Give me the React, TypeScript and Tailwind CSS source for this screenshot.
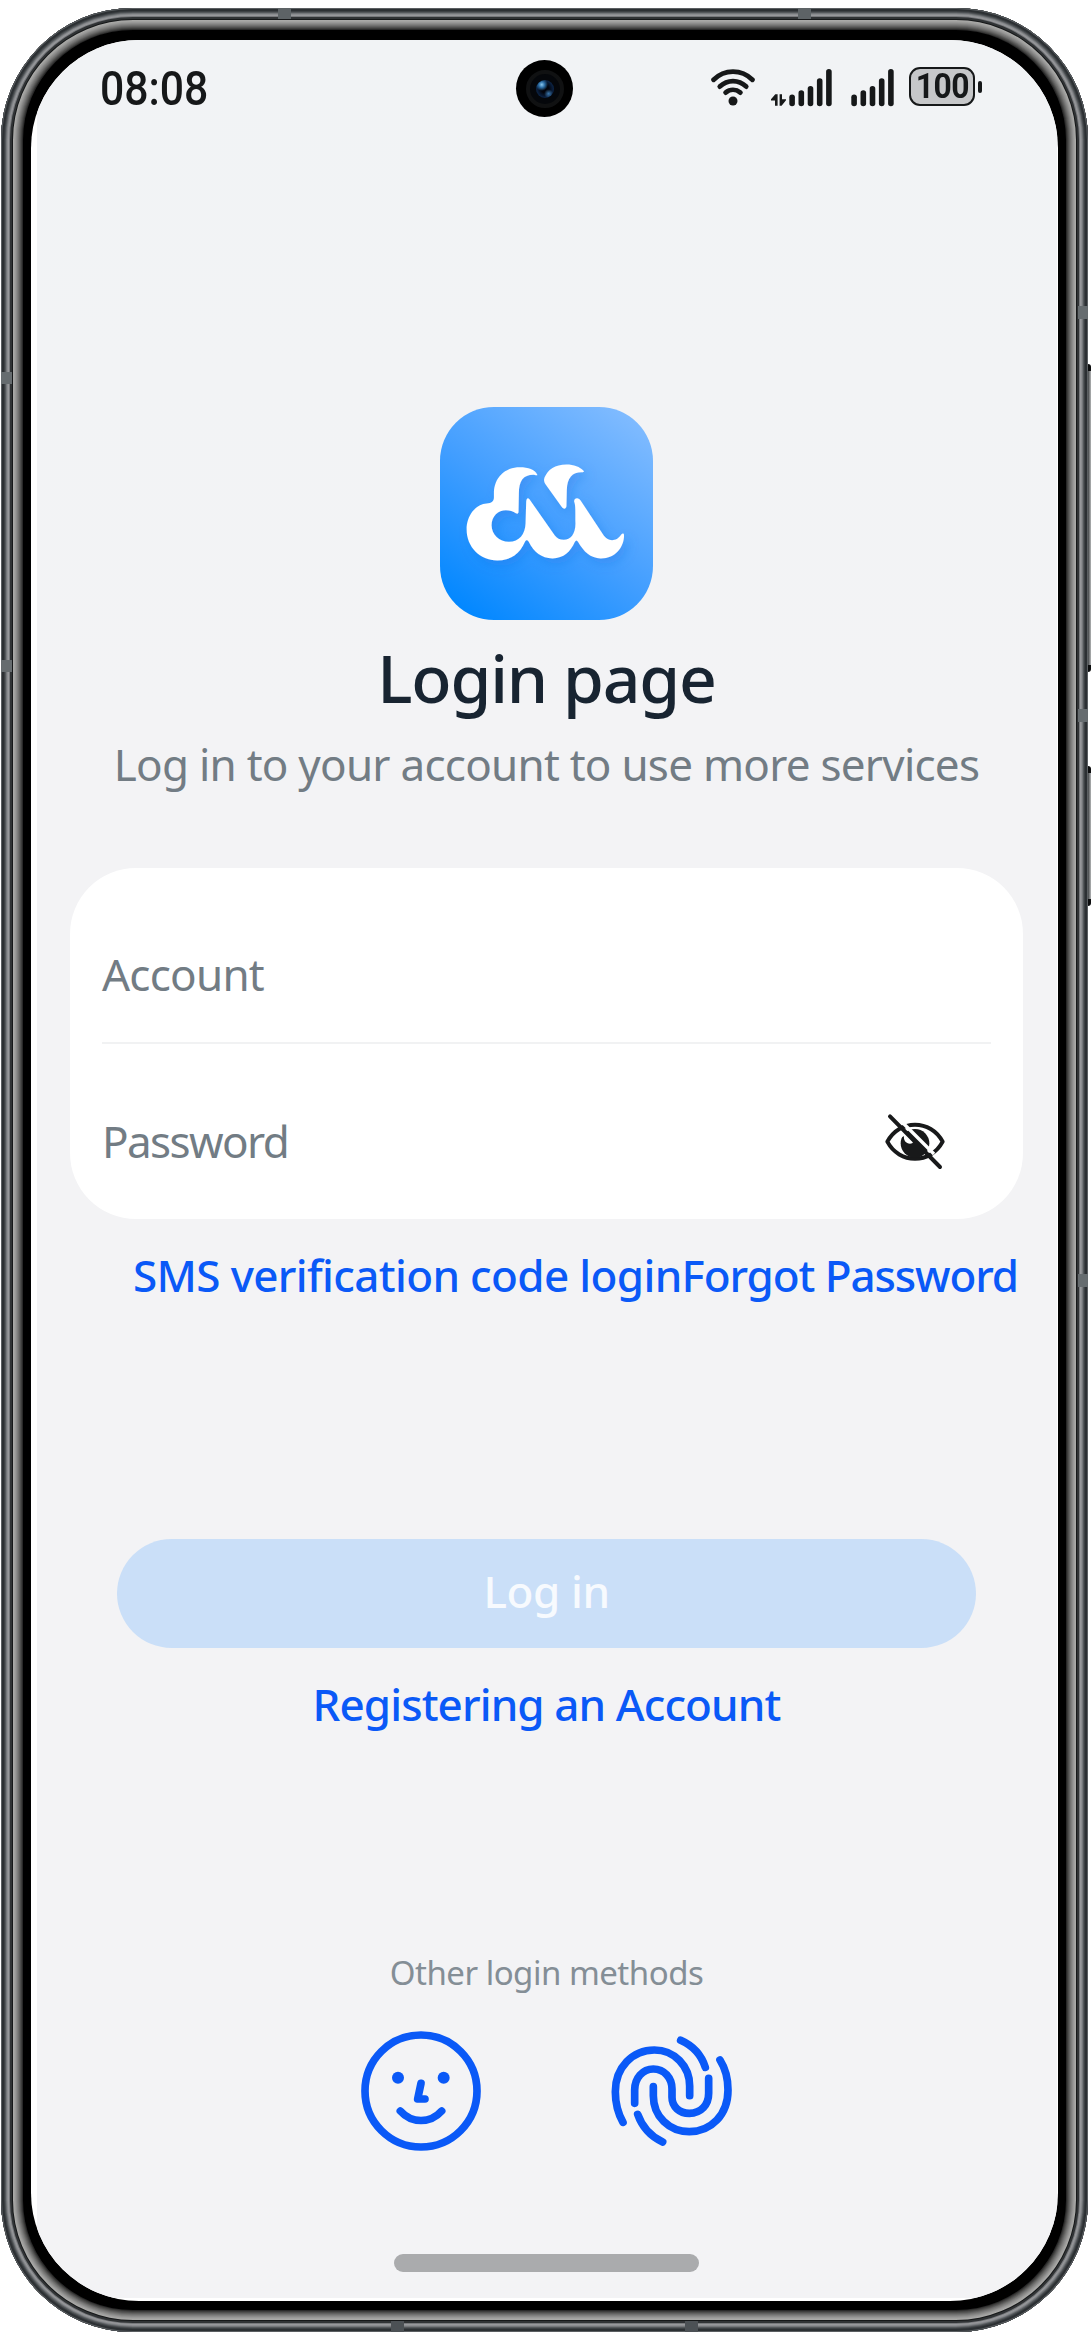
import React from "react";

function WifiIcon() {
  return (
    <svg width="44" height="38" viewBox="711 69 44 38" fill="none" stroke="#161819" strokeWidth="4.8" strokeLinecap="round">
      <path d="M713.6 79.8C724.5 69 741.5 69 752.4 79.8" />
      <path d="M719.8 86.6C727.5 79.2 738.5 79.2 746.2 86.6" />
      <path d="M725.6 92.6C730 89 736 89 740.4 92.6" />
      <circle cx="733" cy="101" r="4.5" fill="#161819" stroke="none" />
    </svg>
  );
}

function SignalBars({ data = false }: { data?: boolean }) {
  const tops = [94.5, 90.3, 86, 78.3, 69];
  return (
    <svg width={data ? 62 : 43} height="38" viewBox={data ? "770 69 62 38" : "789 69 43 38"} fill="#161819">
      {tops.map((y, i) => (
        <rect key={y} x={789.3 + i * 9.2} y={y} width="5.6" height={106.3 - y} rx="2.8" />
      ))}
      {data && (
        <g>
          <path d="M771 99.3L775.3 94.2H777.6V105.8H775V100.4H771Z" />
          <path d="M786 100.2L781.6 105.8H779.6V94.2H782V99.2H786Z" />
        </g>
      )}
    </svg>
  );
}

function Logo() {
  return (
    <svg width="213" height="213" viewBox="60 50 640 640">
      <defs>
        <filter id="soft" x="-20%" y="-20%" width="150%" height="150%">
          <feDropShadow dx="12" dy="16" stdDeviation="16" floodColor="#1a6fe0" floodOpacity="0.3" />
        </filter>
      </defs>
      <g fill="#fff" filter="url(#soft)">
        <path d="M352 253C345 238 325 231 300 231C255 231 222 262 222 310V322C222 333 215 339 200 340C165 343 140 378 140 418C140 470 180 511 232 511C275 511 300 490 315 456C318 449 323 449 327 456C343 487 365 505 398 505C432 505 452 485 465 456C468 450 472 450 475 456C492 485 512 505 543 505C588 505 613 470 613 436C613 428 608 429 604 434C595 446 588 450 577 450C565 450 558 444 552 436L483 332C478 321 463 321 463 334C467 345 467 350 467 400C467 432 452 449 432 449C420 449 411 444 405 436L332 332C327 322 320 321 319 335L317 400C316 432 298 455 267 455C238 455 215 432 215 405C215 378 235 360 258 360C270 360 280 364 288 369C293 372 296 370 296 364L297 310C297 270 312 252 345 254C350 255 353 256 352 253Z" />
        <path d="M492 242C480 230 462 223 440 223C405 223 385 238 374 262C371 270 373 276 377 282L427 352C432 358 440 356 440 347L441 300C442 262 458 246 485 246C491 246 493 245 492 242Z" />
      </g>
    </svg>
  );
}

function EyeOffIcon() {
  return (
    <svg width="64" height="60" viewBox="70 67 192 180" fill="none" strokeLinecap="round">
      <path d="M80 156C98 122 130 105 163 105S228 122 246 156C228 190 196 207 163 207S98 190 80 156Z" stroke="#18191a" strokeWidth="12" strokeLinejoin="round" />
      <circle cx="163" cy="161" r="43" fill="#18191a" />
      <path d="M119 150C122 143 126 140 130 140C128 152 136 162 148 162C153 162 157 159 158 156L134 130L116 134Z" fill="#fff" />
      <path d="M118 91L220 193" stroke="#fff" strokeWidth="10" strokeLinecap="butt" />
      <path d="M88 80L238 232" stroke="#18191a" strokeWidth="12" />
    </svg>
  );
}

function FaceIcon() {
  return (
    <svg width="120" height="120" viewBox="65 63 360 360" fill="none" stroke="#0a59f7" strokeWidth="23" strokeLinecap="round" strokeLinejoin="round">
      <circle cx="245" cy="243" r="168" />
      <path d="M245 220L235 267H257" />
      <path d="M183 303C217 341 273 341 307 303" />
      <g fill="#0a59f7" stroke="none">
        <circle cx="176" cy="203" r="18" />
        <circle cx="313" cy="203" r="18" />
      </g>
    </svg>
  );
}

function FingerprintIcon() {
  return (
    <svg width="121" height="120" viewBox="815 63 363 360" fill="none" stroke="#0a59f7" strokeWidth="23" strokeLinecap="round">
      <path d="M851 337C836 310 828 282 828 245C828 172 880 120 945 120C1005 120 1051 168 1051 228V257" />
      <path d="M886 280V240C886 204 910 177 942 177C975 177 998 204 998 237V262C998 290 1020 310 1050 310C1085 310 1108 285 1108 250V205" />
      <path d="M942 230V257C942 320 990 365 1050 365C1115 365 1166 315 1166 240C1166 205 1158 175 1142 150" />
      <path d="M1024 91C1060 107 1086 135 1098 172" />
      <path d="M895 313C908 350 935 380 970 396" />
    </svg>
  );
}

function Camera() {
  return (
    <div className="absolute left-[516px] top-[60px] flex h-[57px] w-[57px] items-center justify-center rounded-full bg-black">
      <div className="flex h-[38px] w-[38px] items-center justify-center rounded-full border-4 border-[#101112] bg-[#05070b]">
        <div className="h-[18px] w-[18px] rounded-full bg-[radial-gradient(circle_at_32%_26%,#8cc8ee_0,#2c6ea6_16%,transparent_34%),radial-gradient(circle_at_70%_76%,#3c78ad_0,transparent_24%),radial-gradient(circle,#02040c_30%,#0d2950_75%)]" />
      </div>
    </div>
  );
}

function FrameDetails() {
  return (
    <>
      <div className="absolute left-[278px] top-[8px] h-[11px] w-[13px] bg-[#5d6366]" />
      <div className="absolute left-[798px] top-[8px] h-[11px] w-[13px] bg-[#5d6366]" />
      <div className="absolute left-[391px] top-[2321px] h-[11px] w-[13px] bg-[#4c5155]" />
      <div className="absolute left-[685px] top-[2321px] h-[11px] w-[13px] bg-[#4c5155]" />
      <div className="absolute left-px top-[372px] h-[12px] w-[11px] bg-[#666c6f]" />
      <div className="absolute left-px top-[660px] h-[12px] w-[11px] bg-[#666c6f]" />
      <div className="absolute left-[1078px] top-[306px] h-[13px] w-[10px] bg-[#666c6f]" />
      <div className="absolute left-[1078px] top-[709px] h-[13px] w-[10px] bg-[#666c6f]" />
      <div className="absolute left-[1078px] top-[1274px] h-[13px] w-[10px] bg-[#666c6f]" />
      <div className="absolute left-[1088px] top-[364px] h-[308px] w-[3px] rounded-r-sm border-y-[7px] border-[#0c0d0e] bg-[linear-gradient(to_right,#3f4244,#b5b7b8)]" />
      <div className="absolute left-[1088px] top-[766px] h-[140px] w-[3px] rounded-r-sm border-y-[7px] border-[#0c0d0e] bg-[linear-gradient(to_right,#3f4244,#b5b7b8)]" />
    </>
  );
}

export default function App() {
  return (
    <div className="relative h-[2335px] w-[1092px] overflow-hidden bg-white pl-px pt-2 font-['Noto_Sans',sans-serif]">
      <div className="h-[2324px] w-[1087px] rounded-[132px] bg-black pb-[31px] pl-[30px] pr-[30px] pt-8 shadow-[inset_0_0_0_1px_#5b5f62,inset_0_0_0_3px_#2c3033,inset_0_0_0_4px_#3d4144,inset_0_0_0_5px_#54585b,inset_0_0_0_6px_#74777a,inset_0_0_0_7px_#8b8d90,inset_0_0_0_8px_#97989b,inset_0_0_0_9px_#77797c,inset_0_0_0_11px_#303335,inset_0_0_0_12px_#161819,inset_0_0_0_13px_#a9a9a7,inset_0_0_0_14px_#a2a2a0,inset_0_0_0_15px_#989897,inset_0_0_0_16px_#8c8c8b,inset_0_0_0_17px_#7f7f7e,inset_0_0_0_18px_#717170,inset_0_0_0_19px_#616160,inset_0_0_0_20px_#50504f,inset_0_0_0_21px_#3e3e3d,inset_0_0_0_22px_#292929]">
        <div className="h-full overflow-hidden rounded-[108px] bg-white pb-[3px] pl-[6px] pr-px">
          <main className="flex h-full flex-col items-center bg-[linear-gradient(#f1f3f5,#f3f3f5_30%)] pr-px">
            <header className="flex h-[78px] w-full items-start pl-[62px] pt-[26px] text-[#161819]">
              <div className="mt-px w-[612px] font-['Roboto',sans-serif] text-[48px] font-medium leading-[44px]">
                <span className="ml-px inline-block origin-left scale-x-[0.89]">08:08</span>
              </div>
              <div className="mt-[3px] flex items-start">
                <WifiIcon />
                <div className="ml-[15px]"><SignalBars data /></div>
                <div className="ml-[19px]"><SignalBars /></div>
              </div>
              <div className="ml-[15px] mt-px flex items-center gap-[3px]">
                <div className="flex h-[39px] w-[66px] items-center justify-center rounded-[11px] border-[2.5px] border-[#161819] bg-[#c6c7c9] font-['Roboto',sans-serif] text-[35px] font-bold leading-none tracking-[-0.5px]">
                  <span className="inline-block scale-x-[0.91]">100</span>
                </div>
                <div className="h-[12px] w-[4px] rounded-full bg-[#161819]" />
              </div>
            </header>

            <div className="mt-[289px] h-[213px] w-[213px] rounded-[54px] bg-[linear-gradient(36deg,#0488ff_8%,#429eff_48%,#82bcff_95%)]">
              <Logo />
            </div>
            <h1 className="mt-[13px] whitespace-nowrap text-[66px] font-medium leading-[88px] tracking-[-1.2px] text-[#182431]">Login page</h1>
            <p className="mt-[13px] whitespace-nowrap text-[44px] leading-[60px] tracking-[-0.75px] text-[#727c84]">
              Log in to your account to use more services
            </p>

            <section className="mt-[74px] h-[351px] w-[953px] rounded-[66px] bg-white pl-[32px] pr-[32px] pt-[76px] text-[44px] leading-[60px] text-[#727c84]">
              <div className="tracking-[-0.75px]">Account</div>
              <div className="mt-[38px] h-[2px] bg-[#f1f2f3]" />
              <div className="flex items-center justify-between pr-[43px] pt-[67px]">
                <span className="tracking-[-1.6px]">Password</span>
                <span className="relative top-px"><EyeOffIcon /></span>
              </div>
            </section>

            <div className="mt-[26px] flex w-[953px] whitespace-nowrap pl-[63px] text-[44px] font-medium leading-[60px] text-[#0a59f7]">
              <a className="tracking-[-0.65px]">SMS verification code login</a>
              <a className="tracking-[-1.1px]">Forgot Password</a>
            </div>

            <button className="mt-[234px] h-[109px] w-[859px] rounded-full bg-[#cadff8] pb-[5px] text-[44px] font-medium leading-[60px] tracking-[-0.4px] text-[#f7fafe]">
              Log in
            </button>
            <a className="mt-[26px] whitespace-nowrap text-[44px] font-medium leading-[60px] tracking-[-0.9px] text-[#0a59f7]">Registering an Account</a>

            <p className="mt-[217px] whitespace-nowrap text-[33px] leading-[44px] tracking-[-0.5px] text-[#848e96]">Other login methods</p>
            <div className="mt-[36px] flex gap-[130px]">
              <FaceIcon />
              <FingerprintIcon />
            </div>
            <div className="mt-[103px] h-[18px] w-[305px] shrink-0 rounded-full bg-[#aaabad]" />
          </main>
        </div>
      </div>
      <Camera />
      <FrameDetails />
    </div>
  );
}
